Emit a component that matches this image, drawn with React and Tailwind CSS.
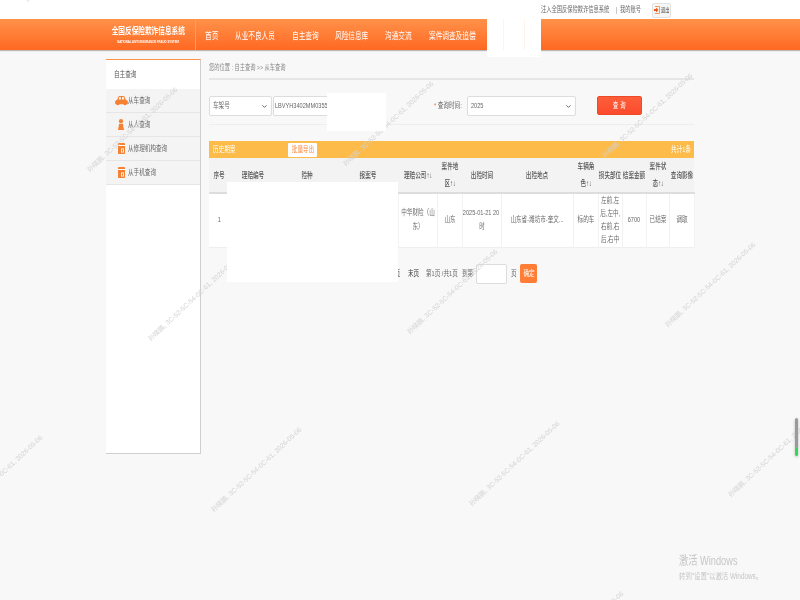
import { ChevronDown } from "lucide-react";

const navItems = [
  { label: "首页", w: "w-[13px]" },
  { label: "从业不良人员", w: "w-[40px]" },
  { label: "自主查询", w: "w-[26px]" },
  { label: "风险信息库", w: "w-[33px]" },
  { label: "沟通交流", w: "w-[27px]" },
  { label: "案件调查及追偿", w: "w-[47px]" },
];

const watermarks = [
  "left-[29px] top-[-4px]",
  "left-[91px] top-[166px]",
  "left-[152px] top-[335px]",
  "left-[215px] top-[506px]",
  "left-[-44px] top-[514px]",
  "left-[347px] top-[160px]",
  "left-[411px] top-[328px]",
  "left-[473px] top-[500px]",
  "left-[537px] top-[670px]",
  "left-[606px] top-[152px]",
  "left-[669px] top-[321px]",
  "left-[732px] top-[491px]",
];

const headers = [
  ["序号"],
  ["理赔编号"],
  ["险种"],
  ["报案号"],
  ["理赔公司↑↓"],
  ["案件地", "区↑↓"],
  ["出险时间"],
  ["出险地点"],
  ["车辆角", "色↑↓"],
  ["损失部位"],
  ["结案金额"],
  ["案件状", "态↑↓"],
  ["查询影像"],
];

const row = [
  ["1"],
  [""],
  [""],
  [""],
  ["中华财险（山", "东）"],
  ["山东"],
  ["2025-01-21 20", "时"],
  ["山东省-潍坊市-奎文..."],
  ["标的车"],
  ["左前,左", "后,左中,", "右前,右", "后,右中"],
  ["6700"],
  ["已结案"],
  ["调取"],
];

const colWidths = [
  "w-[20px]", "w-[48px]", "w-[60px]", "w-[61px]", "w-[39px]", "w-[25px]", "w-[39px]",
  "w-[72px]", "w-[25px]", "w-[24px]", "w-[24px]", "w-[23px]", "w-[25px]",
];

// the reference is squeezed sideways, so the text is too
function T({ children, className = "" }) {
  return <span className={`inline-block whitespace-nowrap scale-x-[0.7] ${className}`}>{children}</span>;
}

function Lines({ lines }) {
  return lines.map((l) => (
    <div key={l} className="flex justify-center">
      <T>{l}</T>
    </div>
  ));
}

function DocIcon() {
  return (
    <svg width="7" height="11" viewBox="0 0 7 11">
      <rect width="7" height="11" rx="0.800" fill="#f58233" />
      <rect x="0" y="2" width="7" height="1" fill="#fff" />
      <rect x="3" y="5.500" width="3" height="4" fill="#fff" />
      <rect x="3.800" y="6.300" width="1.400" height="2.400" fill="#f58233" />
    </svg>
  );
}

function CarIcon() {
  return (
    <svg width="13" height="10" viewBox="0 0 14 11">
      <path d="M3.400 1.200C3.700.4 4.300 0 5 0h4c.7 0 1.300.4 1.600 1.200L11.600 4c1.400.3 2.400 1.200 2.400 2.400V9h-1.400a1.800 1.800 0 0 1-3.400 0H4.800a1.800 1.800 0 0 1-3.400 0H0V6.400C0 5.200 1 4.300 2.400 4z" fill="#f58233" />
      <rect x="4.200" y="1.400" width="2.200" height="2.400" fill="#fff" />
      <rect x="7.600" y="1.400" width="2.200" height="2.400" fill="#fff" />
    </svg>
  );
}

function PersonIcon() {
  return (
    <svg width="6" height="11" viewBox="0 0 6 11">
      <circle cx="3" cy="2.200" r="2.100" fill="#f58233" />
      <path d="M1.200 4.800h3.600L6 11H0z" fill="#f58233" />
    </svg>
  );
}

function SideItem({ icon, label }) {
  return (
    <div className="h-6 flex items-center bg-[#f4f4f4] border-b border-[#e6e6e6]">
      <div className="w-[22px] flex justify-center pl-[8px]">{icon}</div>
      <T className="origin-left text-[8px] text-[#666]">{label}</T>
    </div>
  );
}

function FakeSelect({ value, className }) {
  return (
    <div className={`h-5 shrink-0 bg-white border border-[#ddd] rounded-[2px] flex items-center justify-between pl-[3px] pr-[3px] ${className}`}>
      <T className="origin-left text-[8px] text-[#666]">{value}</T>
      <ChevronDown size={7} strokeWidth={3} className="text-[#555]" />
    </div>
  );
}

export default function App() {
  return (
    <div className="relative w-[800px] h-[600px] overflow-hidden bg-[#f8f8f8] blur-[0.3px] font-['Liberation_Sans','Noto_Sans_CJK_SC',sans-serif]">
      {/* Top strip */}
      <div className="h-[19px] bg-white flex items-center pl-[541px] text-[7.500px] text-[#666]">
        <div className="w-[75px]"><T className="origin-left">注入全国反保险欺诈信息系统</T></div>
        <div className="w-[4px] text-[#888]"><T className="origin-left">|</T></div>
        <div className="w-[32px]"><T className="origin-left">我的账号</T></div>
        <div className="w-[19px] h-[15px] mt-[1px] flex items-center justify-center gap-[1px] bg-[#f6f6f6] border border-[#e2e2e2] rounded-[2px]">
          <svg width="6" height="8" viewBox="0 0 6 8" className="shrink-0">
            <path d="M1 .5h4.500v7H1" fill="none" stroke="#f58233" strokeWidth="0.800" />
            <path d="M0 3h2V1.500L4.500 4 2 6.500V5H0z" fill="#ef5a1c" />
          </svg>
          <div className="w-[8px]"><T className="origin-left text-[6px] text-[#444]">退出</T></div>
        </div>
      </div>

      {/* Header */}
      <div className="h-[31px] bg-gradient-to-b from-[#ff9149] to-[#ff6820] shadow-[0_1px_1px_#b9b9b9] flex pl-[102px] text-white">
        <div className="w-[94px] border-r border-[#ff9a63] flex flex-col items-center pt-[5px]">
          <T className="text-[9.500px] font-bold leading-[13px]">全国反保险欺诈信息系统</T>
          <T className="text-[4px] font-bold leading-[7px] mt-[1px]">NATIONAL ANTI INSURANCE FRAUD SYSTEM</T>
        </div>
        <div className="flex items-center gap-[17px] pl-[9px] pb-[1px]">
          {navItems.map((n) => (
            <div key={n.label} className={n.w}>
              <T className="origin-left text-[9.500px]">{n.label}</T>
            </div>
          ))}
        </div>
      </div>

      <div className="flex pl-[106px] pt-[9px]">
        {/* Sidebar */}
        <div className="w-[95px] h-[395px] bg-white border-t border-t-[#ff9149] border-r border-b border-r-[#cfcfcf] border-b-[#cfcfcf] shrink-0">
          <div className="h-[29px] flex items-center pl-2">
            <T className="origin-left text-[8px] text-[#555]">自主查询</T>
          </div>
          <SideItem icon={<CarIcon />} label="从车查询" />
          <SideItem icon={<PersonIcon />} label="从人查询" />
          <SideItem icon={<DocIcon />} label="从修理机构查询" />
          <SideItem icon={<DocIcon />} label="从手机查询" />
        </div>

        {/* Main */}
        <div className="w-[485px] ml-2">
          <div className="h-[21px] pt-[4px] border-b-2 border-[#e6e6e6] text-[#888] text-[7.500px] leading-[10px]">
            <T className="origin-left">您的位置 : 自主查询 &gt;&gt; 从车查询</T>
          </div>

          <div className="h-[45px] pt-[16px] border-b border-[#eee] flex items-start">
            <FakeSelect value="车架号" className="w-[63px]" />
            <div className="w-[113px] ml-[1px] h-5 shrink-0 bg-white border border-[#ddd] rounded-[2px] pl-[1px] flex items-center">
              <T className="origin-left text-[8px] text-[#666]">LBVYH3402MM0355</T>
            </div>
            <div className="w-[33px] h-5 ml-[48px] flex items-center text-[8px] text-[#666] shrink-0">
              <T className="origin-left"><span className="text-[#ff6a20]">*</span> 查询时间:</T>
            </div>
            <FakeSelect value="2025" className="w-[109px]" />
            <div className="w-[45px] h-[19px] ml-[21px] shrink-0 bg-gradient-to-b from-[#ff5e3a] to-[#fb4b2d] border border-[#ef4a28] rounded-[2px] flex items-center justify-center text-white text-[8px]">
              <T>查 询</T>
            </div>
          </div>

          {/* Result table */}
          <div className="mt-[16px] h-[17px] bg-[#fdbb4a] flex items-center text-white text-[8px] pl-[4px] pr-[4px]">
            <div className="w-[75px]"><T className="origin-left">历史期案</T></div>
            <div className="w-[29px] h-[14px] bg-white rounded-[1px] flex items-center justify-center text-[#ff8a3c]">
              <T>批量导出</T>
            </div>
            <div className="ml-auto w-[19px]"><T className="origin-left">共计1条</T></div>
          </div>

          <table className="table-fixed w-[485px] border-collapse text-[8px] text-[#666]">
            <colgroup>
              {colWidths.map((w, i) => (
                <col key={i} className={w} />
              ))}
            </colgroup>
            <thead>
              <tr className="h-[34px] bg-[#f3f3f3] border-b-2 border-[#ddd]">
                {headers.map((lines, i) => (
                  <th key={i} className="p-0 font-medium text-[#555] text-center leading-[17px]">
                    <Lines lines={lines} />
                  </th>
                ))}
              </tr>
            </thead>
            <tbody>
              <tr className="h-[54px] bg-white border-b border-[#eee]">
                {row.map((lines, i) => (
                  <td key={i} className={`p-0 text-center border-r border-[#f2f2f2] ${lines.length === 4 ? "leading-[13px]" : "leading-[14px]"}`}>
                    <Lines lines={lines} />
                  </td>
                ))}
              </tr>
            </tbody>
          </table>

          {/* Pagination */}
          <div className="mt-[16px] h-5 flex items-center justify-end pr-[157px] text-[8px] text-[#666]">
            <div className="w-[19px]"><T className="origin-left text-[#333]">下页</T></div>
            <div className="w-[18px]"><T className="origin-left text-[#333]">末页</T></div>
            <div className="w-[36px]"><T className="origin-left">第1页 /共1页</T></div>
            <div className="w-[14px]"><T className="origin-left">到第</T></div>
            <div className="w-[31px] h-5 bg-white border border-[#ddd] rounded-[2px]"></div>
            <div className="w-[13px] pl-[4px]"><T className="origin-left">页</T></div>
            <div className="w-[17px] h-[19px] bg-[#ff7d35] rounded-[2px] flex items-center justify-center text-white">
              <T>确定</T>
            </div>
          </div>
        </div>
      </div>

      {/* Watermarks */}
      {watermarks.map((pos) => (
        <div key={pos} className={`absolute ${pos} origin-[0_100%] -rotate-[43deg] whitespace-nowrap text-[6.700px] leading-[8px] text-[#d2d2d2] pointer-events-none`}>
          孙晓鹏, 3C-52-5C-54-0C-61, 2026-05-06
        </div>
      ))}

      {/* Blanked-out areas */}
      <div className="absolute left-[487px] top-[19px] w-[54px] h-[38px] bg-white flex justify-center gap-[20px]">
        <div className="w-px h-[31px] bg-[#fff3ec]"></div>
        <div className="w-px h-[31px] bg-[#fff3ec]"></div>
      </div>
      <div className="absolute left-[327px] top-[93px] w-[59px] h-[38px] bg-white"></div>
      <div className="absolute left-[227px] top-[182px] w-[171px] h-[100px] bg-white"></div>

      {/* Side sliver and Windows notice */}
      <div className="absolute left-[795px] top-[418px] w-[3px] h-[38px] rounded-full bg-gradient-to-b from-[#9a9a9a] from-75% to-[#35d45a] to-80% shadow-[0_1px_3px_#bbb]"></div>
      <div className="absolute left-[679px] top-[554px] text-[#c6c6c6] whitespace-nowrap">
        <div className="origin-left scale-x-[0.77] text-[12px] leading-[14px]">激活 Windows</div>
        <div className="origin-left scale-x-[0.75] text-[8.500px] leading-[12px] mt-[2px]">转到"设置"以激活 Windows。</div>
      </div>
    </div>
  );
}
